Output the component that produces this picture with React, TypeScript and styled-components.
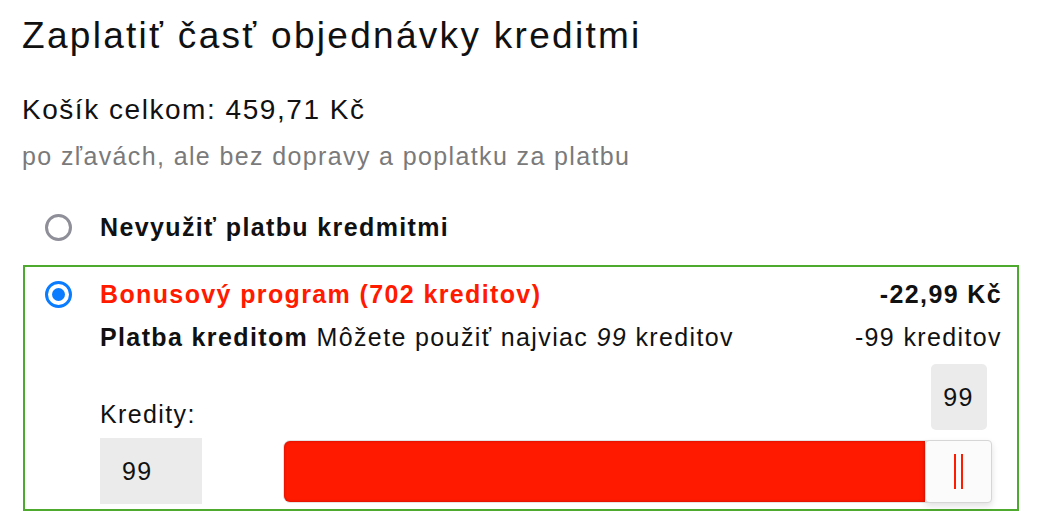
import * as React from "react";
import styled, { createGlobalStyle, css } from "styled-components";

const GlobalStyle = createGlobalStyle`
  html, body {
    margin: 0;
    padding: 0;
    background: #ffffff;
  }
  body {
    font-family: "Liberation Sans", Arial, sans-serif;
    color: #111111;
  }
`;

// the reference type runs wider than Arial, so every text block gets a little tracking
const tracking = css`
  letter-spacing: 0.055em;
`;

const Page = styled.div`
  display: flex;
  flex-direction: column;
  padding: 15px 0 0 22px;
  width: 1048px;
  box-sizing: border-box;
`;

const Title = styled.h1`
  margin: 0;
  font-size: 37px;
  font-weight: 400;
  line-height: 42px;
  letter-spacing: 0.062em;
`;

const Total = styled.div`
  margin-top: 37px;
  font-size: 28px;
  line-height: 32px;
  ${tracking}
`;

const Note = styled.div`
  margin-top: 16px;
  font-size: 25px;
  line-height: 28px;
  color: #7a7a7a;
  ${tracking}
`;

const OptionRow = styled.label`
  display: flex;
  align-items: center;
  gap: 28px;
  margin-top: 43px;
  padding-left: 23px;
  font-size: 25px;
  line-height: 28px;
  font-weight: 700;
  ${tracking}
`;

const Radio = styled.span<{ $checked?: boolean }>`
  flex: none;
  position: relative;
  width: 27px;
  height: 27px;
  box-sizing: border-box;
  border-radius: 50%;
  border: 3px solid #8f8f99;
  background: #ffffff;

  ${({ $checked }) =>
    $checked &&
    css`
      border: 3.5px solid #0a7cff;
      &::after {
        content: "";
        position: absolute;
        inset: 4px;
        border-radius: 50%;
        background: #0a7cff;
      }
    `}
`;

const SelectedBox = styled.div`
  display: flex;
  align-items: flex-start;
  gap: 28px;
  margin: 24px 0 0 1px;
  width: 996px;
  box-sizing: border-box;
  border: 2px solid #4ea92f;
  padding: 13px 15px 5px 20px;
`;

const BoxRadio = styled(Radio)`
  margin-top: 1px;
`;

const Content = styled.div`
  flex: 1;
  display: flex;
  flex-direction: column;
`;

const Line = styled.div<{ $gap?: number }>`
  display: flex;
  justify-content: space-between;
  align-items: baseline;
  font-size: 25px;
  line-height: 28px;
  margin-top: ${({ $gap }) => $gap ?? 0}px;
  ${tracking}
`;

const ProgramName = styled.span`
  color: #ff1a00;
  font-weight: 700;
`;

const Strong = styled.b`
  font-weight: 700;
`;

const SliderArea = styled.div`
  display: flex;
  align-items: flex-end;
  margin-top: 49px;
`;

const InputColumn = styled.div`
  display: flex;
  flex-direction: column;
  gap: 10px;
  width: 102px;
  flex: none;
`;

const InputLabel = styled.span`
  font-size: 25px;
  line-height: 28px;
  ${tracking}
`;

const NumberBox = styled.div`
  height: 66px;
  background: #ebebeb;
  font-size: 25px;
  display: flex;
  align-items: center;
  padding-left: 22px;
  ${tracking}
`;

const Track = styled.div`
  flex: 1;
  display: flex;
  height: 63px;
  margin: 0 10px 1px 81px;
  box-sizing: border-box;
  border: 1px solid #e4e4e4;
  border-radius: 7px;
  background: #f4f4f4;
`;

const Fill = styled.div`
  flex: 1;
  background: #ff1a00;
  border-radius: 6px 0 0 6px;
  box-shadow: inset 0 0 3px rgba(120, 0, 0, 0.45);
`;

const Thumb = styled.div`
  position: relative;
  flex: none;
  width: 67px;
  margin: -1px -1px -1px 0;
  box-sizing: border-box;
  border: 1px solid #d6d6d6;
  border-radius: 4px;
  background: #fbfbfb;
  box-shadow: 0 3px 6px rgba(0, 0, 0, 0.12);
  display: flex;
  align-items: center;
  justify-content: center;
  gap: 5px;
`;

const Grip = styled.span`
  width: 2px;
  height: 35px;
  background: #ff1a00;
`;

const Tooltip = styled.div`
  position: absolute;
  left: 50%;
  bottom: calc(100% + 11px);
  transform: translateX(-50%);
  width: 56px;
  height: 66px;
  border-radius: 5px;
  background: #ebebeb;
  display: flex;
  align-items: center;
  justify-content: center;
  font-size: 25px;
  font-weight: 400;
  ${tracking}
`;

export default function App() {
  const credits = 99;

  return (
    <>
      <GlobalStyle />
      <Page>
        <Title>Zaplatiť časť objednávky kreditmi</Title>
        <Total>Košík celkom: 459,71 Kč</Total>
        <Note>po zľavách, ale bez dopravy a poplatku za platbu</Note>

        <OptionRow>
          <Radio />
          Nevyužiť platbu kredmitmi
        </OptionRow>

        <SelectedBox>
          <BoxRadio $checked />
          <Content>
            <Line>
              <ProgramName>Bonusový program (702 kreditov)</ProgramName>
              <Strong>-22,99 Kč</Strong>
            </Line>
            <Line $gap={15}>
              <span>
                <Strong>Platba kreditom</Strong> Môžete použiť najviac{" "}
                <i>{credits}</i> kreditov
              </span>
              <span>-{credits} kreditov</span>
            </Line>

            <SliderArea>
              <InputColumn>
                <InputLabel>Kredity:</InputLabel>
                <NumberBox>{credits}</NumberBox>
              </InputColumn>
              <Track>
                <Fill />
                <Thumb>
                  <Tooltip>{credits}</Tooltip>
                  <Grip />
                  <Grip />
                </Thumb>
              </Track>
            </SliderArea>
          </Content>
        </SelectedBox>
      </Page>
    </>
  );
}
